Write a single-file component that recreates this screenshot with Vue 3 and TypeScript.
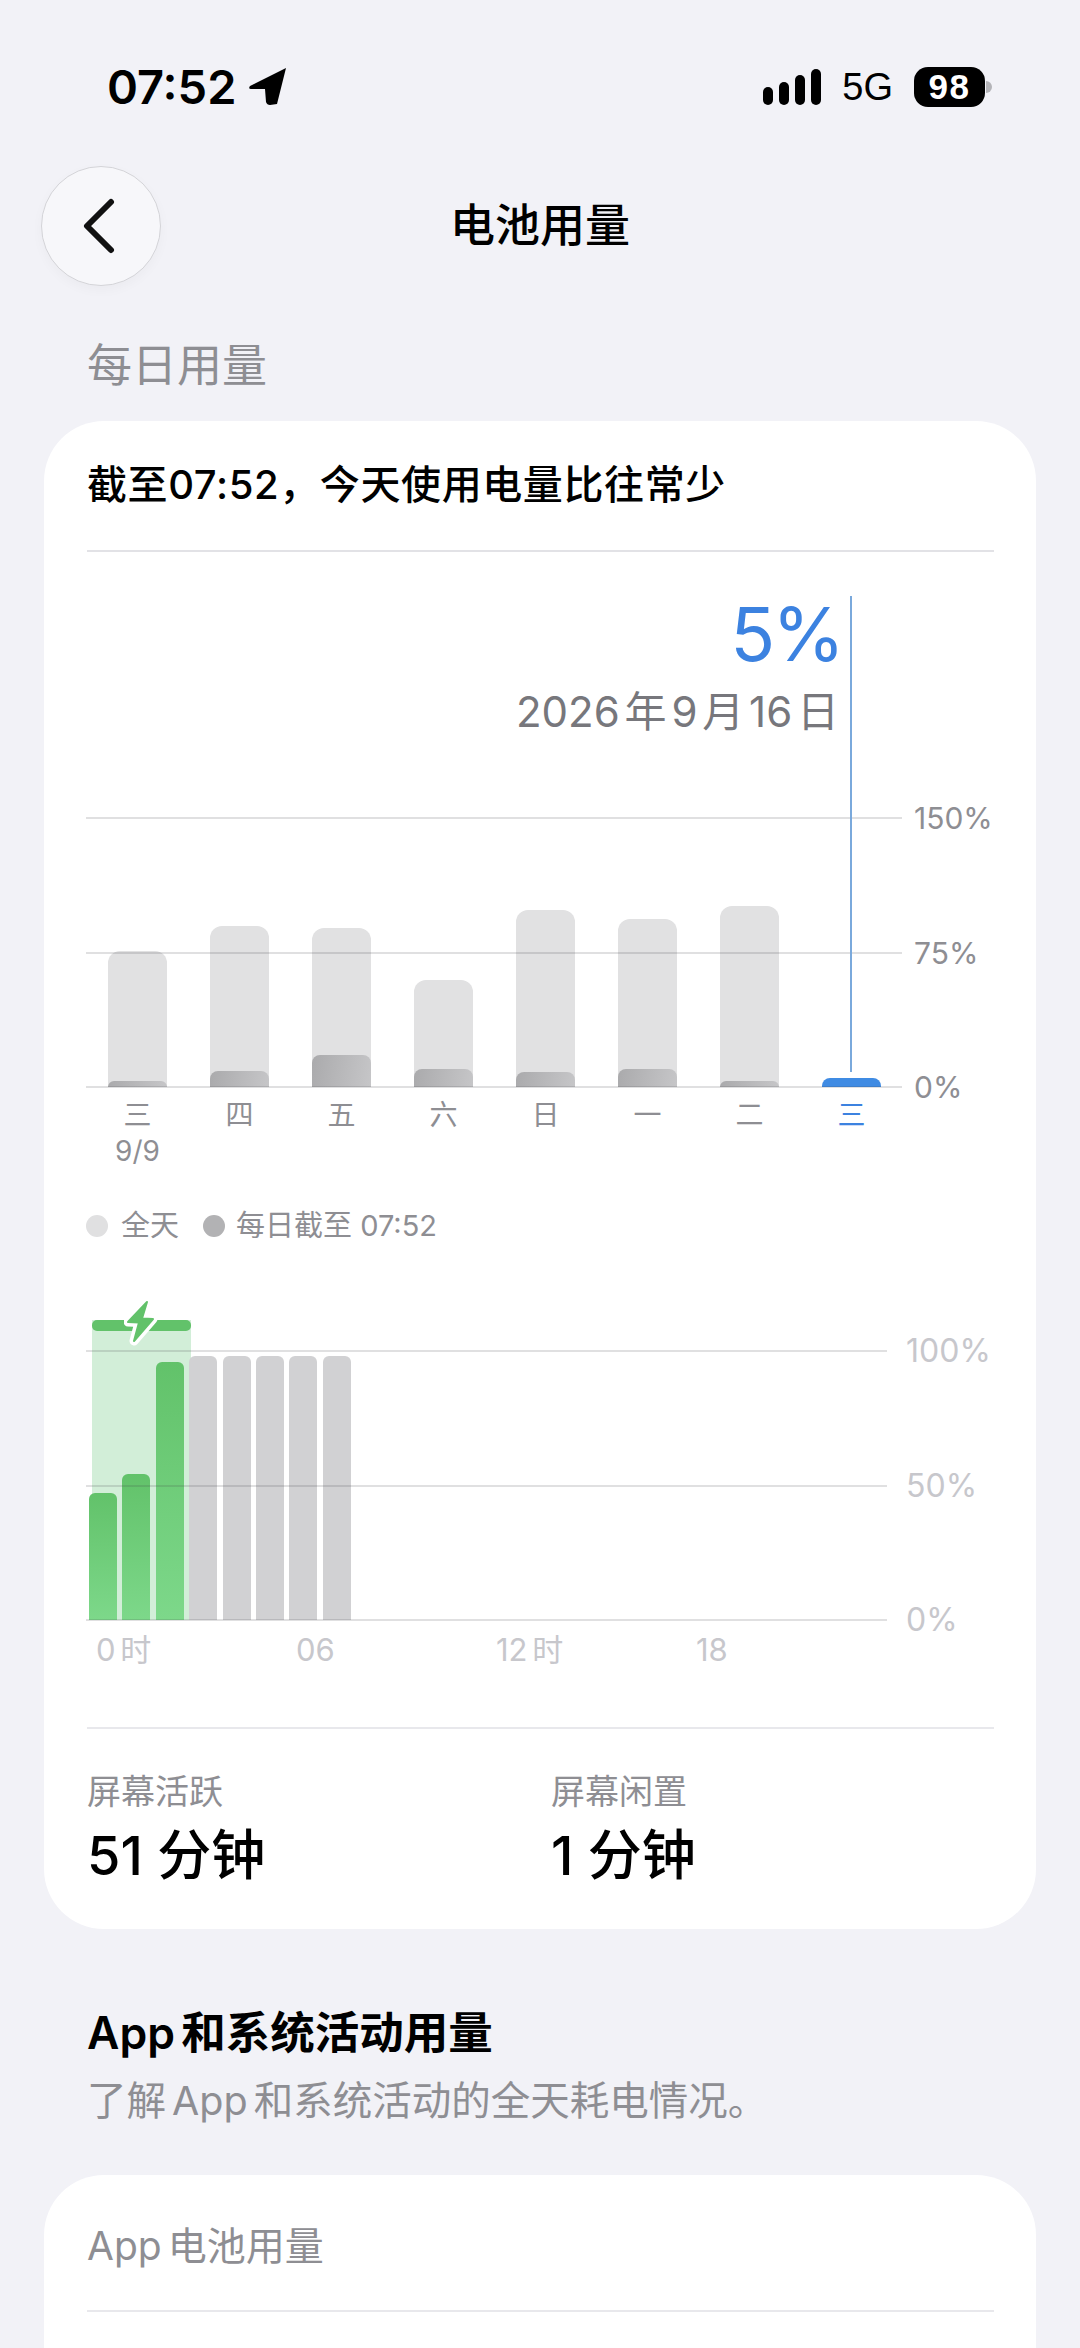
<template>
  <div class="page">
    <div class="status">
      <div class="status-left">
        <span class="time">07:52</span>
        <svg class="arrow" width="38" height="38" viewBox="0 0 38 38">
          <path d="M37 0 L1 18 Q-1 21 2 21 L16 21 L17 34 Q18 37 21 37 L28 36 Z" fill="#000" />
        </svg>
      </div>
      <div class="status-right">
        <div class="signal">
          <i v-for="h in signalBars" :key="h" :style="{ height: h + 'px' }"></i>
        </div>
        <span class="net">5G</span>
        <div class="battery"><span>98</span></div>
        <div class="nub"></div>
      </div>
    </div>

    <div class="nav">
      <button class="back">
        <svg width="36" height="56" viewBox="0 0 36 56">
          <path d="M31 4 L7 28 L31 52" fill="none" stroke="#111" stroke-width="6" stroke-linecap="round" stroke-linejoin="round" />
        </svg>
      </button>
      <h1>电池用量</h1>
    </div>

    <h2 class="section-title">每日用量</h2>

    <section class="card">
      <div class="card-head">截至07:52，今天使用电量比往常少</div>

      <div class="usage-wrap">
        <div class="cursor"></div>
        <div class="usage-head">
          <div class="percent">5%</div>
          <div class="date">2026 年 9 月 16 日</div>
        </div>

        <div class="plot">
          <div class="bars">
            <div v-for="(d, i) in days" :key="i" class="day-bar" :style="{ height: d.total + 'px' }">
              <div class="day-part" :class="{ today: d.today }" :style="{ height: d.part + 'px' }"></div>
            </div>
          </div>
          <div class="grid">
            <div v-for="l in dayScale" :key="l" class="grid-row">
              <span class="line"></span>
              <span class="tick">{{ l }}</span>
            </div>
          </div>
        </div>

        <div class="days">
          <div v-for="(d, i) in days" :key="i" class="day-label" :class="{ today: d.today }">
            {{ d.label }}
            <div v-if="d.sub">{{ d.sub }}</div>
          </div>
        </div>
      </div>

      <div class="legend">
        <i class="dot light"></i><span>全天</span>
        <i class="dot dark"></i><span>每日截至 07:52</span>
      </div>

      <div class="plot hourly">
        <div class="charging">
          <div class="charging-cap"></div>
          <svg class="bolt" width="34" height="48" viewBox="0 0 34 48">
            <path class="bolt-edge" d="M23 3 L4 23 L15 23.5 L10 42 L29 20 L18 19.5 Z" />
            <path class="bolt-fill" d="M23 3 L4 23 L15 23.5 L10 42 L29 20 L18 19.5 Z" />
          </svg>
        </div>
        <div class="bars hour-bars">
          <div
            v-for="(h, i) in hours"
            :key="i"
            class="hour-bar"
            :class="h.kind"
            :style="{ height: h.value + 'px' }"
          ></div>
        </div>
        <div class="grid">
          <div v-for="l in hourScale" :key="l" class="grid-row">
            <span class="line"></span>
            <span class="tick">{{ l }}</span>
          </div>
        </div>
      </div>

      <div class="hour-labels">
        <span v-for="l in hourLabels" :key="l">{{ l }}</span>
      </div>

      <div class="stats">
        <div v-for="s in stats" :key="s.label">
          <div class="stat-label">{{ s.label }}</div>
          <div class="stat-value">{{ s.value }}</div>
        </div>
      </div>
    </section>

    <h3 class="app-title">App 和系统活动用量</h3>
    <p class="app-sub">了解 App 和系统活动的全天耗电情况。</p>

    <section class="card card-apps">
      <div class="apps-head">App 电池用量</div>
    </section>
  </div>
</template>

<script setup lang="ts">
interface Day {
  label: string
  sub?: string
  total: number
  part: number
  today?: boolean
}

interface Hour {
  value: number
  kind: 'green' | 'gray'
}

const signalBars = [18, 23, 30, 36]

const days: Day[] = [
  { label: '三', sub: '9/9', total: 136, part: 6 },
  { label: '四', total: 161, part: 16 },
  { label: '五', total: 159, part: 32 },
  { label: '六', total: 107, part: 18 },
  { label: '日', total: 177, part: 15 },
  { label: '一', total: 168, part: 18 },
  { label: '二', total: 181, part: 6 },
  { label: '三', total: 0, part: 9, today: true }
]

const hours: Hour[] = [
  { value: 127, kind: 'green' },
  { value: 146, kind: 'green' },
  { value: 258, kind: 'green' },
  { value: 264, kind: 'gray' },
  { value: 264, kind: 'gray' },
  { value: 264, kind: 'gray' },
  { value: 264, kind: 'gray' },
  { value: 264, kind: 'gray' }
]

const dayScale = ['150%', '75%', '0%']
const hourScale = ['100%', '50%', '0%']
const hourLabels = ['0 时', '06', '12 时', '18']

const stats = [
  { label: '屏幕活跃', value: '51 分钟' },
  { label: '屏幕闲置', value: '1 分钟' }
]
</script>

<style>
html,
body {
  margin: 0;
  background: #f2f2f7;
}
</style>

<style scoped>
.page {
  width: 1080px;
  height: 2348px;
  overflow: hidden;
  background: #f2f2f7;
  font-family: Inter, "Noto Sans CJK SC", sans-serif;
  color: #000;
}

.status {
  height: 166px;
  box-sizing: border-box;
  padding: 60px 88px 0 107px;
  display: flex;
  justify-content: space-between;
  align-items: flex-start;
}

.status-left {
  display: flex;
  align-items: center;
  gap: 13px;
  height: 54px;
}

.time {
  font-size: 47px;
  font-weight: 600;
  line-height: 54px;
}

.status-right {
  display: flex;
  align-items: center;
  height: 54px;
}

.signal {
  display: flex;
  align-items: flex-end;
  gap: 6px;
  height: 36px;
  margin-right: 21px;
}

.signal i {
  width: 10px;
  border-radius: 5px;
  background: #000;
}

.net {
  font-family: "Liberation Sans", sans-serif;
  font-size: 38px;
  line-height: 54px;
  margin-right: 21px;
}

.battery {
  width: 71px;
  height: 40px;
  border-radius: 14px;
  background: #000;
  color: #fff;
  display: flex;
  align-items: center;
  justify-content: center;
  font-family: "Liberation Sans", sans-serif;
  font-size: 35px;
  font-weight: 700;
  letter-spacing: 1.5px;
}

.nub {
  width: 6px;
  height: 12px;
  margin-left: 1px;
  border-radius: 0 6px 6px 0;
  background: #b4b4b8;
}

.nav {
  display: grid;
  grid-template-columns: 120px 1fr 120px;
  align-items: center;
  padding: 0 41px;
  height: 120px;
}

.back {
  width: 120px;
  height: 120px;
  padding: 0;
  box-sizing: border-box;
  border-radius: 50%;
  border: 1.5px solid #d4d4d8;
  background: #f7f7fa;
  box-shadow: 0 4px 12px rgba(0, 0, 0, 0.03);
  display: flex;
  align-items: center;
  justify-content: center;
}

.back svg {
  margin-left: -6px;
}

.nav h1 {
  margin: 0;
  text-align: center;
  font-size: 45px;
  line-height: 56px;
  font-weight: 500;
}

.section-title {
  margin: 56px 0 0 87px;
  font-size: 45px;
  line-height: 48px;
  font-weight: 400;
  color: #8e8e93;
}

.card {
  margin: 31px 44px 0;
  padding: 0 42px 43px 43px;
  background: #fff;
  border-radius: 60px;
}

.card-head {
  height: 131px;
  box-sizing: border-box;
  padding-bottom: 8px;
  display: flex;
  align-items: center;
  font-size: 40px;
  letter-spacing: 0.6px;
  font-weight: 500;
  border-bottom: 2px solid #e2e2e6;
}

.usage-wrap {
  position: relative;
}

.cursor {
  position: absolute;
  left: 763px;
  top: 44px;
  width: 2px;
  height: 476px;
  background: #7aa9dc;
  z-index: 2;
}

.usage-head {
  height: 266px;
  box-sizing: border-box;
  padding: 42px 155px 0 0;
  display: flex;
  flex-direction: column;
  align-items: flex-end;
}

.percent {
  font-size: 74px;
  line-height: 80px;
  letter-spacing: -3px;
  margin-right: -3px;
  color: #3c82e0;
}

.date {
  margin-top: 13px;
  font-size: 42px;
  line-height: 50px;
  color: #77777c;
  word-spacing: -7px;
}

.plot {
  position: relative;
  height: 269px;
  margin-left: -1px;
}

.bars {
  display: flex;
  align-items: flex-end;
  gap: 43px;
  height: 100%;
  padding-left: 22px;
}

.day-bar {
  position: relative;
  width: 59px;
  border-radius: 12px 12px 0 0;
  background: #e1e1e2;
}

.day-part {
  position: absolute;
  left: 0;
  right: 0;
  bottom: 0;
  border-radius: 8px 8px 0 0;
  background: linear-gradient(100deg, #aaaaac, #c6c6c8);
}

.day-part.today {
  background: #3f8be3;
}

.grid {
  position: absolute;
  left: 0;
  right: 0;
  top: -18px;
  bottom: -18px;
  display: flex;
  flex-direction: column;
  justify-content: space-between;
}

.grid-row {
  display: flex;
  align-items: center;
  height: 36px;
  gap: 12px;
}

.line {
  flex: 1;
  height: 2px;
  background: rgba(60, 60, 67, 0.16);
}

.tick {
  width: 80px;
  font-size: 30px;
  line-height: 36px;
  color: #8e8e93;
}

.days {
  display: flex;
  gap: 43px;
  margin: 10px 0 0 21px;
}

.day-label {
  width: 59px;
  text-align: center;
  font-size: 28px;
  line-height: 36px;
  color: #8e8e93;
}

.day-label.today {
  color: #3c82e0;
}

.legend {
  display: flex;
  align-items: center;
  margin: 39px 0 0 -1px;
  font-size: 29px;
  line-height: 36px;
  color: #8e8e93;
}

.dot {
  width: 22px;
  height: 22px;
  border-radius: 50%;
  margin-right: 13px;
}

.dot.light {
  background: #e0e0e1;
}

.dot.dark {
  margin-left: 24px;
  margin-right: 11px;
  background: #b2b2b4;
}

.hourly {
  margin-top: 107px;
}

.hourly .grid-row {
  gap: 19px;
}

.hourly .tick {
  width: 88px;
  font-size: 32px;
  color: #c7c7cc;
}

.charging {
  position: absolute;
  left: 6px;
  top: -31px;
  bottom: 0;
  width: 99px;
  background: #d2eed8;
}

.charging-cap {
  height: 11px;
  border-radius: 5px;
  background: #62c26a;
}

.bolt {
  position: absolute;
  left: 32px;
  top: -21px;
}

.bolt-edge {
  fill: #fff;
  stroke: #fff;
  stroke-width: 9;
  stroke-linejoin: round;
}

.bolt-fill {
  fill: #62c26a;
  stroke: #62c26a;
  stroke-width: 2;
  stroke-linejoin: round;
}

.hour-bars {
  position: relative;
  gap: 5.4px;
  padding-left: 3px;
}

.hour-bar {
  width: 28px;
  border-radius: 6px 6px 0 0;
}

.hour-bar.green {
  background: linear-gradient(180deg, #62c26a, #7dd88a);
}

.hour-bar.gray {
  background: #d1d1d3;
}

.hour-labels {
  display: grid;
  grid-template-columns: repeat(4, 200px);
  margin: 12px 0 0 9px;
  font-size: 31px;
  line-height: 36px;
  color: #c7c7cc;
  word-spacing: -4px;
}

.stats {
  display: grid;
  grid-template-columns: 464px 1fr;
  margin-top: 59px;
  padding-top: 43px;
  border-top: 2px solid #e8e8ec;
}

.stat-label {
  font-size: 34px;
  line-height: 40px;
  color: #8e8e93;
}

.stat-value {
  margin-top: 14px;
  font-size: 54px;
  line-height: 60px;
  font-weight: 500;
}

.app-title {
  margin: 79px 0 0 87px;
  font-size: 44.5px;
  line-height: 50px;
  font-weight: 600;
  word-spacing: -5px;
}

.app-sub {
  margin: 21px 0 0 87px;
  font-size: 39.5px;
  line-height: 44px;
  color: #8e8e93;
  word-spacing: -5px;
}

.card-apps {
  margin-top: 52px;
  padding-bottom: 0;
  height: 300px;
}

.apps-head {
  height: 137px;
  box-sizing: border-box;
  display: flex;
  align-items: center;
  font-size: 39px;
  color: #8e8e93;
  border-bottom: 2px solid #e8e8ec;
  word-spacing: -5px;
}
</style>
